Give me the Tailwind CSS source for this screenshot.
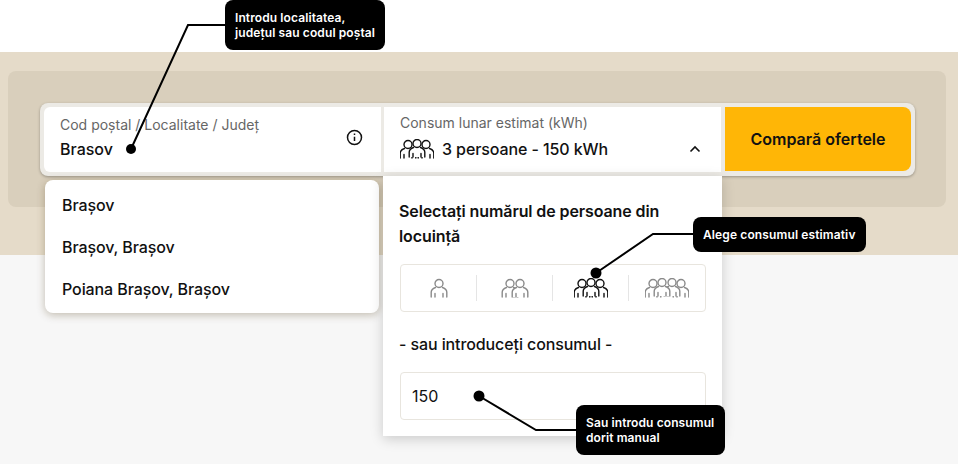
<!DOCTYPE html>
<html>
  <head>
    <meta charset="UTF-8" />
    <title>Compară ofertele</title>
    <script src="https://cdn.jsdelivr.net/npm/@tailwindcss/browser@4"></script>
  </head>
  <body class="relative h-[464px] w-[958px] overflow-hidden bg-[#f7f7f7] font-['Inter',sans-serif] text-[#111]">
    <svg width="0" height="0" class="absolute">
      <defs>
        <g id="person" fill="none" stroke="currentColor" stroke-width="1.4" stroke-linecap="round" stroke-linejoin="round">
          <path d="M1.200 19v-4.800c0-2.400 2-3.900 4.300-4.700h7c2.300.8 4.300 2.300 4.300 4.700V19z" fill="#fff" stroke="none" />
          <path d="M1.200 19v-4.800c0-2.400 2-3.900 4.300-4.700M16.800 19v-4.800c0-2.400-2-3.900-4.300-4.700M5 19v-3.500M13 19v-3.500" />
          <circle cx="9" cy="5.500" r="4" fill="#fff" />
        </g>
      </defs>
    </svg>

    <div class="h-[52px] bg-white"></div>
    <div class="h-[203px] bg-[#e5dbc9] px-2 pt-[19px]">
      <div class="h-[136px] w-[938px] rounded-lg bg-[#d9cfbc] px-8 pt-8">
        <div class="flex h-[73px] w-[875px] gap-[3px] rounded-lg bg-[#eceae5] p-1 shadow-[0_1px_3px_rgba(0,0,0,0.3)]">
          <div class="flex h-[65px] w-[337px] items-start justify-between rounded-l-md bg-white pl-4 pr-[18px] pt-[9px]">
            <div>
              <div class="text-sm leading-[18px] text-[#666]">Cod poștal / Localitate / Județ</div>
              <div class="mt-[4px] text-base font-medium leading-[22px]">Brasov</div>
            </div>
            <svg class="mt-[13px]" width="17" height="17" viewBox="0 0 17 17" fill="none" stroke="#111" stroke-width="1.500">
              <circle cx="8.500" cy="8.500" r="7" />
              <path d="M8.500 7.700v4.200M8.500 4.600v1.400" />
            </svg>
          </div>
          <div class="h-[65px] w-[337px] bg-white pl-4 pr-5 pt-[7px]">
            <div class="text-sm leading-[18px] text-[#666]">Consum lunar estimat (kWh)</div>
            <div class="mt-[4px] flex h-[26px] items-center">
              <svg width="34" height="20" viewBox="0 0 34 20" class="text-[#111]">
                <use href="#person" x="-1" y="0" />
                <use href="#person" x="17" y="0" />
                <use href="#person" x="8" y="-1" />
              </svg>
              <span class="ml-2 text-base font-medium tracking-[-0.1px]">3 persoane - 150 kWh</span>
              <svg class="ml-auto" width="12" height="8" viewBox="0 0 12 8" fill="none" stroke="#111" stroke-width="1.600">
                <path d="M1.500 6.500 6 2l4.500 4.500" />
              </svg>
            </div>
          </div>
          <button class="ml-px h-[64px] w-[186px] rounded-r-lg bg-[#ffb606] text-base font-semibold">Compară ofertele</button>
        </div>
      </div>
    </div>

    <!-- dropdown localitate -->
    <ul class="absolute left-[45px] top-[180px] flex h-[133px] w-[334px] flex-col gap-5 rounded-lg bg-white pl-[17px] pt-[14px] text-base font-medium tracking-[-0.1px] shadow-[0_2px_8px_rgba(70,50,10,0.3)]">
      <li class="leading-[22px]">Brașov</li>
      <li class="leading-[22px]">Brașov, Brașov</li>
      <li class="leading-[22px]">Poiana Brașov, Brașov</li>
    </ul>

    <!-- dropdown consum -->
    <div class="absolute left-[383px] top-[176px] h-[260px] w-[339px] bg-white px-4 pt-[23px] shadow-[0_3px_12px_rgba(0,0,0,0.18)]">
      <div class="text-base font-semibold leading-[25px] tracking-[-0.1px]">Selectați numărul de persoane din locuință</div>
      <div class="ml-px mt-[15px] flex h-12 w-[306px] items-center rounded border border-[#e8e5de] text-[#8a8a8a]">
        <div class="flex h-[26px] w-[76px] items-center justify-center border-r border-[#e5e5e5]">
          <svg width="18" height="20" viewBox="0 0 18 20"><use href="#person" /></svg>
        </div>
        <div class="flex h-[26px] w-[76px] items-center justify-center border-r border-[#e5e5e5]">
          <svg width="28" height="20" viewBox="0 0 28 20"><use href="#person" /><use href="#person" x="10" /></svg>
        </div>
        <div class="flex h-[26px] w-[76px] items-center justify-center border-r border-[#e5e5e5] text-[#111]">
          <svg width="34" height="20" viewBox="0 0 34 20"><use href="#person" x="-1" /><use href="#person" x="17" /><use href="#person" x="8" y="-1" /></svg>
        </div>
        <div class="flex flex-1 items-center justify-center">
          <svg width="44" height="20" viewBox="0 0 44 20"><use href="#person" x="-1" /><use href="#person" x="27" /><use href="#person" x="18" y="-1" /><use href="#person" x="8" y="-1" /></svg>
        </div>
      </div>
      <div class="mt-5 text-base font-medium leading-6 tracking-[-0.1px]">- sau introduceți consumul -</div>
      <div class="ml-px mt-4 flex h-12 w-[306px] items-center rounded border border-[#e8e5de] pl-[11px] text-base">150</div>
    </div>

    <!-- linii adnotari -->
    <svg class="absolute inset-0" width="958" height="464" fill="none" stroke="#000" stroke-width="2">
      <path d="M226 25H188L131 149" />
      <circle cx="131" cy="149" r="5" fill="#000" stroke="none" />
      <path d="M694 234H653L596 273" />
      <circle cx="596" cy="273" r="5.500" fill="#000" stroke="none" />
      <path d="M578 430H536L479 396" />
      <circle cx="479" cy="396" r="5.500" fill="#000" stroke="none" />
    </svg>

    <div class="absolute left-[225px] top-0 h-[50px] w-[160px] rounded-lg bg-black pl-[10px] pt-[10px] text-xs font-semibold leading-[15px] tracking-[0.1px] text-white">Introdu localitatea, județul sau codul poștal</div>
    <div class="absolute left-[693px] top-[217px] flex h-[35px] w-[173px] items-center rounded-lg bg-black pl-[10px] text-xs font-semibold tracking-[0.12px] text-white">Alege consumul estimativ</div>
    <div class="absolute left-[576px] top-[405px] h-[50px] w-[149px] rounded-lg bg-black pl-[10px] pt-[10px] text-xs font-semibold leading-[15px] tracking-[0.1px] text-white">Sau introdu consumul dorit manual</div>
  </body>
</html>
